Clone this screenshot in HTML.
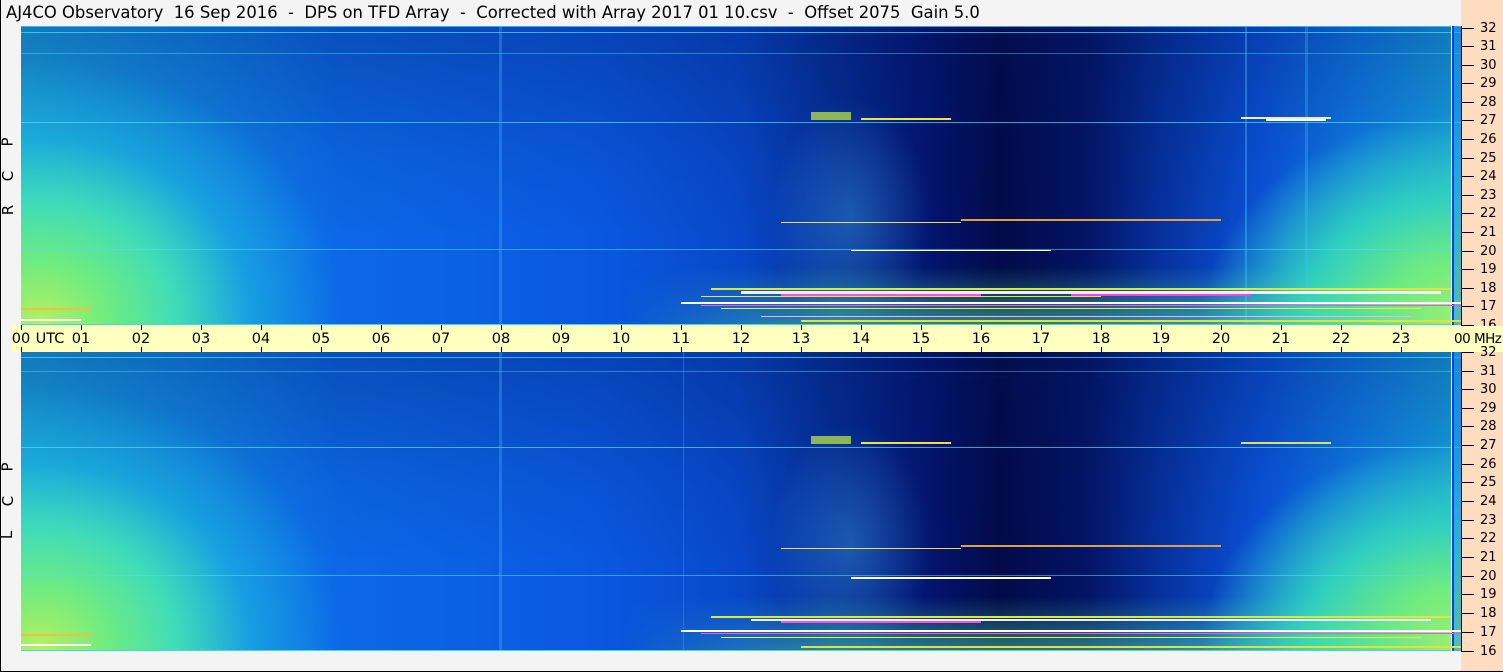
<!DOCTYPE html>
<html><head><meta charset="utf-8"><style>
html,body{margin:0;padding:0}
body{width:1503px;height:672px;background:#f4f4f5;position:relative;overflow:hidden;font-family:"DejaVu Sans","Liberation Sans",sans-serif;color:#000}
#title{position:absolute;left:6px;top:3px;font-size:16.4px;white-space:pre;letter-spacing:0px}
.panel{position:absolute;left:21px;width:1440px;height:299px;overflow:hidden;
background:
radial-gradient(ellipse 300px 260px at 20px 295px,#b4f060 0%,#70ec80 22%,#40dcb8 45%,rgba(30,190,220,.5) 70%,rgba(30,170,230,0) 100%),
radial-gradient(ellipse 260px 210px at 1440px 299px,#a8f070 0%,#70ec80 30%,#30d0c0 60%,rgba(20,160,230,0) 100%),
linear-gradient(to bottom,rgba(0,20,90,.3) 0%,rgba(0,20,90,.08) 45%,rgba(0,0,0,0) 70%),
linear-gradient(to right,#1aa8e4 0%,#1288e8 12%,#0c68e6 22%,#0a58e0 40%,#0848c8 50%,#06309a 56%,#031470 63%,#020a48 68%,#031466 74%,#06309c 79%,#0a52d8 86%,#1080e8 93%,#18a8e4 100%);}
.panel div{position:absolute;height:1px}
.h{left:0;width:1440px;background:rgba(80,220,255,.7)}
.fade{-webkit-mask-image:linear-gradient(to right,transparent,#000 25%,#000 85%,transparent);mask-image:linear-gradient(to right,transparent,#000 25%,#000 85%,transparent)}
.axis{position:absolute;left:1461px;width:42px;background:#fddcbf}
.tick{position:absolute;left:0;width:13px;height:1px;background:#000}
.lab{position:absolute;left:19px;font-size:13px;line-height:13px}
#band{position:absolute;left:12px;top:325px;width:1449px;height:27px;background:#ffffc0}
.ut{position:absolute;top:332px;font-size:14.5px;line-height:14px;transform:translateX(-50%)}
.vt{position:absolute;width:1px;background:#000}
.side{position:absolute;left:3px;font-size:15px;transform:rotate(-90deg);transform-origin:center}
</style></head><body>
<div id="title">AJ4CO Observatory  16 Sep 2016  -  DPS on TFD Array  -  Corrected with Array 2017 01 10.csv  -  Offset 2075  Gain 5.0</div>

<div class="side" style="top:133px">P</div>
<div class="side" style="top:167px">C</div>
<div class="side" style="top:201px">R</div>
<div class="side" style="top:458px">P</div>
<div class="side" style="top:492px">C</div>
<div class="side" style="top:526px">L</div>

<!-- top panel -->
<div class="panel" style="top:26px">
<div class="h" style="top:0;background:rgba(60,200,255,.8)"></div>
<div class="h" style="top:6px"></div>
<div class="h" style="top:27px;opacity:.6"></div>
<div class="h" style="top:96px"></div>
<div class="h" style="top:223px;opacity:.8"></div>
<div class="h" style="top:298px;height:2px;background:#40e0d0"></div>
<div style="left:478px;top:0;width:3px;height:299px;background:rgba(60,180,255,.35)"></div>
<div style="left:1224px;top:0;width:2px;height:299px;background:rgba(60,200,255,.4)"></div>
<div style="left:1284px;top:0;width:3px;height:299px;background:rgba(60,200,255,.3)"></div>
<div style="left:1430px;top:0;width:1px;height:299px;background:#fff"></div>
<div style="left:1431px;top:0;width:2px;height:299px;background:#0a40e0"></div>
<div style="left:1433px;top:0;width:7px;height:299px;background:rgba(30,150,240,.6)"></div>
<div style="left:740px;top:60px;width:180px;height:239px;background:radial-gradient(ellipse 45% 50% at 50% 55%,rgba(80,200,255,.3),rgba(0,0,0,0))"></div>
<div style="left:790px;top:86px;width:40px;height:8px;background:rgba(200,240,60,.7)"></div>
<div style="left:840px;top:92px;width:90px;height:2px;background:#f0e040"></div>
<div style="left:1220px;top:91px;width:90px;height:2px;background:#f0f0a0"></div>
<div style="left:1245px;top:93px;width:60px;height:2px;background:#fff"></div>
<div style="left:940px;top:193px;width:260px;height:2px;background:#e0a040"></div>
<div style="left:760px;top:196px;width:180px;height:1px;background:#f0e040"></div>
<div style="left:830px;top:224px;width:200px;height:1px;background:#fff"></div>
<div class="fade" style="left:600px;top:240px;width:840px;height:59px;background:linear-gradient(to bottom,rgba(40,200,200,0),rgba(80,220,160,.55))"></div>
<div style="left:690px;top:262px;width:740px;height:2px;background:#d8e840"></div>
<div style="left:720px;top:265px;width:700px;height:3px;background:#f0f0f0"></div>
<div style="left:760px;top:268px;width:200px;height:2px;background:#ff50e0"></div>
<div style="left:1050px;top:268px;width:180px;height:2px;background:#ff40e0"></div>
<div style="left:680px;top:270px;width:400px;height:1px;background:#f0e040"></div>
<div style="left:660px;top:276px;width:780px;height:2px;background:#ffffff"></div>
<div style="left:680px;top:279px;width:760px;height:1px;background:#ff50e0"></div>
<div style="left:700px;top:282px;width:700px;height:1px;background:#e0f040"></div>
<div style="left:740px;top:290px;width:650px;height:1px;background:#f0b0f0"></div>
<div style="left:780px;top:294px;width:660px;height:2px;background:#e0e040"></div>
<div style="left:0;top:282px;width:70px;height:2px;background:#f0c040"></div>
<div style="left:0;top:293px;width:60px;height:2px;background:#fff"></div>
</div>

<!-- bottom panel -->
<div class="panel" style="top:352px">
<div class="h" style="top:5px"></div>
<div class="h" style="top:19px;opacity:.6"></div>
<div class="h" style="top:95px"></div>
<div class="h" style="top:223px;opacity:.8"></div>
<div class="h" style="top:298px;height:2px;background:#40e0d0"></div>
<div style="left:478px;top:0;width:3px;height:299px;background:rgba(60,180,255,.35)"></div>
<div style="left:662px;top:0;width:1px;height:299px;background:rgba(60,180,255,.35)"></div>
<div style="left:1430px;top:0;width:1px;height:299px;background:#fff"></div>
<div style="left:1431px;top:0;width:2px;height:299px;background:#0a40e0"></div>
<div style="left:1433px;top:0;width:7px;height:299px;background:rgba(30,150,240,.6)"></div>
<div style="left:740px;top:60px;width:180px;height:239px;background:radial-gradient(ellipse 45% 50% at 50% 55%,rgba(80,200,255,.3),rgba(0,0,0,0))"></div>
<div style="left:790px;top:84px;width:40px;height:8px;background:rgba(200,240,60,.7)"></div>
<div style="left:840px;top:90px;width:90px;height:2px;background:#f0e040"></div>
<div style="left:1220px;top:90px;width:90px;height:2px;background:#e0e060"></div>
<div style="left:940px;top:193px;width:260px;height:2px;background:#e0a040"></div>
<div style="left:760px;top:196px;width:180px;height:1px;background:#f0e040"></div>
<div style="left:830px;top:225px;width:200px;height:2px;background:#fff"></div>
<div class="fade" style="left:600px;top:244px;width:840px;height:55px;background:linear-gradient(to bottom,rgba(40,200,200,0),rgba(80,220,160,.5))"></div>
<div style="left:690px;top:264px;width:740px;height:2px;background:#d8e840"></div>
<div style="left:730px;top:267px;width:680px;height:2px;background:#f0f0f0"></div>
<div style="left:760px;top:269px;width:200px;height:2px;background:#ff50e0"></div>
<div style="left:660px;top:278px;width:780px;height:2px;background:#ffffff"></div>
<div style="left:680px;top:281px;width:760px;height:1px;background:#ff50e0"></div>
<div style="left:700px;top:285px;width:700px;height:1px;background:#e0f040"></div>
<div style="left:780px;top:294px;width:660px;height:2px;background:#e0e040"></div>
<div style="left:0;top:282px;width:70px;height:2px;background:#f0c040"></div>
<div style="left:0;top:292px;width:70px;height:2px;background:#fff"></div>
</div>

<!-- middle band -->
<div id="band"></div>
<div class="vt" style="left:21px;top:325px;height:5px"></div><div class="vt" style="left:21px;top:347px;height:5px"></div>
<div class="ut" style="left:21px">00</div>
<div class="ut" style="left:50px">UTC</div>
<div class="vt" style="left:81px;top:325px;height:5px"></div><div class="vt" style="left:81px;top:347px;height:5px"></div><div class="ut" style="left:81px">01</div>
<div class="vt" style="left:141px;top:325px;height:5px"></div><div class="vt" style="left:141px;top:347px;height:5px"></div><div class="ut" style="left:141px">02</div>
<div class="vt" style="left:201px;top:325px;height:5px"></div><div class="vt" style="left:201px;top:347px;height:5px"></div><div class="ut" style="left:201px">03</div>
<div class="vt" style="left:261px;top:325px;height:5px"></div><div class="vt" style="left:261px;top:347px;height:5px"></div><div class="ut" style="left:261px">04</div>
<div class="vt" style="left:321px;top:325px;height:5px"></div><div class="vt" style="left:321px;top:347px;height:5px"></div><div class="ut" style="left:321px">05</div>
<div class="vt" style="left:381px;top:325px;height:5px"></div><div class="vt" style="left:381px;top:347px;height:5px"></div><div class="ut" style="left:381px">06</div>
<div class="vt" style="left:441px;top:325px;height:5px"></div><div class="vt" style="left:441px;top:347px;height:5px"></div><div class="ut" style="left:441px">07</div>
<div class="vt" style="left:501px;top:325px;height:5px"></div><div class="vt" style="left:501px;top:347px;height:5px"></div><div class="ut" style="left:501px">08</div>
<div class="vt" style="left:561px;top:325px;height:5px"></div><div class="vt" style="left:561px;top:347px;height:5px"></div><div class="ut" style="left:561px">09</div>
<div class="vt" style="left:621px;top:325px;height:5px"></div><div class="vt" style="left:621px;top:347px;height:5px"></div><div class="ut" style="left:621px">10</div>
<div class="vt" style="left:681px;top:325px;height:5px"></div><div class="vt" style="left:681px;top:347px;height:5px"></div><div class="ut" style="left:681px">11</div>
<div class="vt" style="left:741px;top:325px;height:5px"></div><div class="vt" style="left:741px;top:347px;height:5px"></div><div class="ut" style="left:741px">12</div>
<div class="vt" style="left:801px;top:325px;height:5px"></div><div class="vt" style="left:801px;top:347px;height:5px"></div><div class="ut" style="left:801px">13</div>
<div class="vt" style="left:861px;top:325px;height:5px"></div><div class="vt" style="left:861px;top:347px;height:5px"></div><div class="ut" style="left:861px">14</div>
<div class="vt" style="left:921px;top:325px;height:5px"></div><div class="vt" style="left:921px;top:347px;height:5px"></div><div class="ut" style="left:921px">15</div>
<div class="vt" style="left:981px;top:325px;height:5px"></div><div class="vt" style="left:981px;top:347px;height:5px"></div><div class="ut" style="left:981px">16</div>
<div class="vt" style="left:1041px;top:325px;height:5px"></div><div class="vt" style="left:1041px;top:347px;height:5px"></div><div class="ut" style="left:1041px">17</div>
<div class="vt" style="left:1101px;top:325px;height:5px"></div><div class="vt" style="left:1101px;top:347px;height:5px"></div><div class="ut" style="left:1101px">18</div>
<div class="vt" style="left:1161px;top:325px;height:5px"></div><div class="vt" style="left:1161px;top:347px;height:5px"></div><div class="ut" style="left:1161px">19</div>
<div class="vt" style="left:1221px;top:325px;height:5px"></div><div class="vt" style="left:1221px;top:347px;height:5px"></div><div class="ut" style="left:1221px">20</div>
<div class="vt" style="left:1281px;top:325px;height:5px"></div><div class="vt" style="left:1281px;top:347px;height:5px"></div><div class="ut" style="left:1281px">21</div>
<div class="vt" style="left:1341px;top:325px;height:5px"></div><div class="vt" style="left:1341px;top:347px;height:5px"></div><div class="ut" style="left:1341px">22</div>
<div class="vt" style="left:1401px;top:325px;height:5px"></div><div class="vt" style="left:1401px;top:347px;height:5px"></div><div class="ut" style="left:1401px">23</div>

<!-- right axis -->
<div class="axis" style="top:0;height:672px">
<div style="position:absolute;left:0;top:26px;width:1px;height:626px;background:#000"></div>
<div class="tick" style="top:28px"></div><div class="lab" style="top:22px">32</div>
<div class="tick" style="top:46px"></div><div class="lab" style="top:40px">31</div>
<div class="tick" style="top:65px"></div><div class="lab" style="top:59px">30</div>
<div class="tick" style="top:83px"></div><div class="lab" style="top:77px">29</div>
<div class="tick" style="top:102px"></div><div class="lab" style="top:96px">28</div>
<div class="tick" style="top:120px"></div><div class="lab" style="top:114px">27</div>
<div class="tick" style="top:139px"></div><div class="lab" style="top:133px">26</div>
<div class="tick" style="top:158px"></div><div class="lab" style="top:152px">25</div>
<div class="tick" style="top:176px"></div><div class="lab" style="top:170px">24</div>
<div class="tick" style="top:195px"></div><div class="lab" style="top:189px">23</div>
<div class="tick" style="top:213px"></div><div class="lab" style="top:207px">22</div>
<div class="tick" style="top:232px"></div><div class="lab" style="top:226px">21</div>
<div class="tick" style="top:251px"></div><div class="lab" style="top:245px">20</div>
<div class="tick" style="top:269px"></div><div class="lab" style="top:263px">19</div>
<div class="tick" style="top:288px"></div><div class="lab" style="top:282px">18</div>
<div class="tick" style="top:306px"></div><div class="lab" style="top:300px">17</div>
<div class="tick" style="top:325px"></div><div class="lab" style="top:319px">16</div>
<div style="position:absolute;left:-1px;top:326px;width:43px;height:26px;background:#ffffc0"></div>
<div style="position:absolute;left:-7px;top:332px;font-size:13.5px;line-height:14px;white-space:nowrap;letter-spacing:-0.5px">00 MHz</div>
<div class="tick" style="top:352px"></div><div class="lab" style="top:346px">32</div>
<div class="tick" style="top:371px"></div><div class="lab" style="top:365px">31</div>
<div class="tick" style="top:389px"></div><div class="lab" style="top:383px">30</div>
<div class="tick" style="top:408px"></div><div class="lab" style="top:402px">29</div>
<div class="tick" style="top:426px"></div><div class="lab" style="top:420px">28</div>
<div class="tick" style="top:445px"></div><div class="lab" style="top:439px">27</div>
<div class="tick" style="top:464px"></div><div class="lab" style="top:458px">26</div>
<div class="tick" style="top:482px"></div><div class="lab" style="top:476px">25</div>
<div class="tick" style="top:501px"></div><div class="lab" style="top:495px">24</div>
<div class="tick" style="top:520px"></div><div class="lab" style="top:514px">23</div>
<div class="tick" style="top:538px"></div><div class="lab" style="top:532px">22</div>
<div class="tick" style="top:557px"></div><div class="lab" style="top:551px">21</div>
<div class="tick" style="top:576px"></div><div class="lab" style="top:570px">20</div>
<div class="tick" style="top:594px"></div><div class="lab" style="top:588px">19</div>
<div class="tick" style="top:613px"></div><div class="lab" style="top:607px">18</div>
<div class="tick" style="top:632px"></div><div class="lab" style="top:626px">17</div>
<div class="tick" style="top:651px"></div><div class="lab" style="top:645px">16</div>
</div>
<div style="position:absolute;left:0;top:0;width:1px;height:672px;background:#000"></div>
<div style="position:absolute;left:0;top:671px;width:1503px;height:1px;background:#000"></div>
</body></html>
